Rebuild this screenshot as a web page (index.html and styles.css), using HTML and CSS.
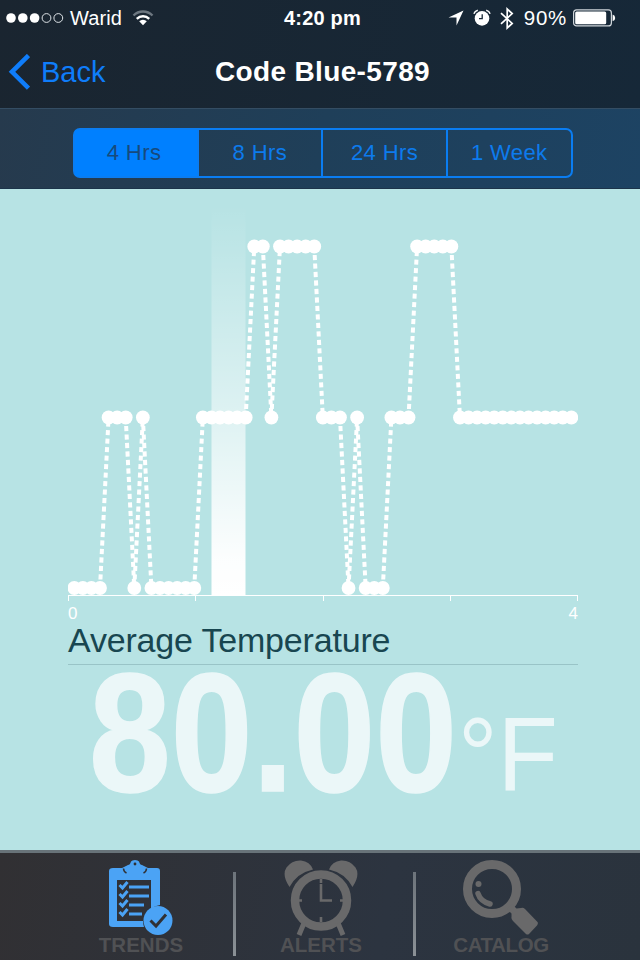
FILE: index.html
```html
<!DOCTYPE html>
<html lang="en">
<head>
    <meta charset="UTF-8">
    <meta name="viewport" content="width=device-width, initial-scale=1.0">
    <title>Code Blue-5789</title>
    <link rel="stylesheet" href="styles.css">
</head>
<body>
    <div class="app">
        <header class="header">
            <div class="status">
                <div class="status-left">
                    <svg class="signal" width="58" height="12" viewBox="0 0 58 12">
                        <g fill="#fff">
                            <circle cx="5" cy="6" r="4.8"/>
                            <circle cx="16.8" cy="6" r="4.8"/>
                            <circle cx="28.6" cy="6" r="4.8"/>
                        </g>
                        <g fill="none" stroke="#dfe4e8">
                            <circle cx="40.5" cy="6" r="4.4"/>
                            <circle cx="52.3" cy="6" r="4.4"/>
                        </g>
                    </svg>
                    <span class="carrier">Warid</span>
                    <svg width="22" height="16" viewBox="0 0 22 16" fill="none" stroke-width="2.4">
                        <path d="M1.5 5.5A13.4 13.4 0 0 1 20.5 5.5" stroke="#6d7780"/>
                        <path d="M4.8 8.8A8.8 8.8 0 0 1 17.2 8.8" stroke="#fff"/>
                        <path d="M7.2 11.3A5.4 5.4 0 0 1 14.8 11.3L11 15.3Z" fill="#fff"/>
                    </svg>
                </div>
                <span class="time">4:20 pm</span>
                <div class="status-right">
                    <svg width="16" height="16" viewBox="0 0 16 16"><path d="M15.5 .5L8.5 15.5V7.5H.5Z" fill="#fff"/></svg>
                    <svg class="clock" width="18" height="18" viewBox="0 0 18 18">
                        <circle cx="9" cy="9.4" r="7.3" fill="#fff"/>
                        <path d="M9.2 5.2V9.700H6" fill="none" stroke="#162635" stroke-width="1.3"/>
                        <path d="M.9 4.8Q1.8 2 4.8 1.2M17.1 4.8Q16.2 2 13.2 1.2" fill="none" stroke="#fff" stroke-width="1.5"/>
                    </svg>
                    <svg class="bluetooth" width="14" height="23" viewBox="0 0 14 23"><path d="M1 6.2L12.2 16.4L7.2 21V2L12.2 6.6L1 16.8" fill="none" stroke="#fff" stroke-width="1.7"/></svg>
                    <span class="percent">90%</span>
                    <svg class="battery" width="43" height="18" viewBox="0 0 43 18">
                        <rect x=".6" y=".9" width="37.8" height="16" rx="3" fill="none" stroke="#cfd5da" stroke-width="1.2"/>
                        <rect x="2.2" y="2.5" width="31" height="12.8" rx="1.5" fill="#fff"/>
                        <path d="M39.6 5.6Q42.2 6.2 42.2 8.9T39.6 12.2Z" fill="#fff"/>
                    </svg>
                </div>
            </div>
            <div class="nav">
                <a class="back">
                    <svg width="23" height="36" viewBox="0 0 23 36"><path d="M21.500 1.5L5 17.8L21.500 34.2" fill="none" stroke="#0f7dfa" stroke-width="4.6"/></svg>
                    <span>Back</span>
                </a>
                <h1 class="title">Code Blue-5789</h1>
            </div>
        </header>

        <div class="range">
            <ul class="segments">
                <li class="active">4 Hrs</li>
                <li>8 Hrs</li>
                <li>24 Hrs</li>
                <li>1 Week</li>
            </ul>
        </div>

        <main class="content">
            <svg class="chart" width="510" height="407" viewBox="68 189 510 407">
                <defs>
                    <linearGradient id="band" x1="0" y1="0" x2="0" y2="1">
                        <stop offset="0" stop-color="#fff" stop-opacity="0"/>
                        <stop offset=".5" stop-color="#fff" stop-opacity=".5"/>
                        <stop offset=".9" stop-color="#fff" stop-opacity=".95"/>
                        <stop offset="1" stop-color="#fff"/>
                    </linearGradient>
                </defs>
                <rect x="211.5" y="205" width="34" height="391" fill="url(#band)"/>
                <g id="lines" stroke="#fff" stroke-width="4" stroke-dasharray="5.1 3.4"></g>
                <g id="dots" fill="#fff"></g>
            </svg>
            <div class="ticks"><i></i><i></i><i></i><i></i></div>
            <div class="axis-labels"><span>0</span><span>4</span></div>
            <h2 class="caption">Average Temperature</h2>
            <svg class="reading" width="510" height="150" viewBox="68 665 510 150" fill="#ebf7f8">
                <text class="value" x="89" y="790.5" textLength="368" lengthAdjust="spacingAndGlyphs">80.00</text>
                <text class="unit" x="458" y="790.5" textLength="100" lengthAdjust="spacingAndGlyphs">°F</text>
            </svg>
        </main>

        <nav class="tabs">
            <a class="tab">
                <svg width="64" height="76" viewBox="0 0 64 76">
                    <path fill="#4ba3f5" fill-rule="evenodd" d="M4 8H13L19 5Q21 5 22 1.5Q23 0 26 0T30 1.5Q31 5 33 5L39 8H48Q51 8 51 11V45Q45 46 42 49V20H8V61H34Q34 64 35 67H4Q0 67 0 64V11Q0 8 4 8Z"/>
                    <path d="M14.5 8.500Q14.5 11.500 17.500 13M37.500 8.500Q37.500 11.500 34.500 13" fill="none" stroke="#303135" stroke-width="1.5"/>
                    <circle cx="26" cy="4" r="1.4" fill="#303135"/>
                    <g fill="none" stroke="#4ba3f5" stroke-width="3">
                        <path d="M20 27H40M20 36H40M20 45H35M20 54H33"/>
                        <path d="M10.500 25L13.500 28L18.500 22M10.500 34L13.500 37L18.500 31M10.500 43L13.500 46L18.500 40M10.500 52L13.500 55L18.500 49"/>
                    </g>
                    <circle cx="49" cy="60.500" r="14.500" fill="#4ba3f5"/>
                    <path d="M41.500 60.500L47 66L57 54.500" fill="none" stroke="#303135" stroke-width="3"/>
                </svg>
                <span>TRENDS</span>
            </a>
            <a class="tab">
                <svg width="76" height="76" viewBox="0 0 76 76">
                    <g fill="#69696a">
                        <path d="M6.500 27Q-1.500 15 3.500 7.500Q9 0 18 .5Q27 1.500 30 9.500Q14 13 6.500 27Z"/>
                        <path d="M69.500 27Q77.500 15 72.500 7.500Q67 0 58 .5Q49 1.500 46 9.500Q62 13 69.500 27Z"/>
                    </g>
                    <circle cx="38" cy="40.500" r="26" fill="none" stroke="#69696a" stroke-width="8.500"/>
                    <path d="M21 63L16 75M55 63L60 75" stroke="#69696a" stroke-width="5"/>
                    <path d="M38 24V40.500H49" fill="none" stroke="#69696a" stroke-width="2.600"/>
                    <path d="M38 19V23M38 57V62M16 40.500H19M57 40.500H60" stroke="#69696a" stroke-width="2.600"/>
                </svg>
                <span>ALERTS</span>
            </a>
            <a class="tab catalog">
                <svg width="76" height="76" viewBox="0 0 76 76">
                    <circle cx="29" cy="29" r="24.500" fill="none" stroke="#69696a" stroke-width="9"/>
                    <circle cx="15.500" cy="24" r="3" fill="#69696a"/>
                    <path d="M15 33.500Q17.500 41.500 27 44" fill="none" stroke="#69696a" stroke-width="5.500" stroke-linecap="round"/>
                    <path d="M44 49L49 44L53.500 48.500L58 48Q60 47 62 49L74.500 62Q75.500 63.500 74 65.500L66 74Q64.500 75 63 74L50 61Q48 59 48.500 57V53.500Z" fill="#69696a"/>
                </svg>
                <span>CATALOG</span>
            </a>
        </nav>
    </div>
    <script src="chart.js"></script>
</body>
</html>
```
FILE: styles.css
```css
* {box-sizing: border-box;}
body,h1,h2,ul,li {margin: 0; padding: 0;}
body {
    font: 20px/1 "Liberation Sans", Arial, sans-serif;
    background: #b7e3e4;
}
svg {display: block; flex: none;}
.app {
    display: flex;
    flex-direction: column;
    width: 640px;
    height: 960px;
    overflow: hidden;
}

/* header */
.header {
    height: 109px;
    color: #fff;
    background: linear-gradient(100deg, #1a2530, #162838);
    border-bottom: 1px solid #344d63;
}
.status {
    display: grid;
    grid-template-columns: 278px auto 1fr;
    align-items: center;
    height: 36px;
    padding: 0 26px 0 6px;
}
.status-left, .status-right {display: flex; align-items: center;}
.status-right {justify-content: flex-end;}
.carrier {margin: 0 10px 0 6px; letter-spacing: .1px;}
.time {font-weight: bold; letter-spacing: .2px;}
.clock {margin-left: 9px;}
.bluetooth {margin-left: 9px;}
.percent {margin-left: 10px; font-size: 20.5px; letter-spacing: .7px;}
.battery {margin-left: 6px; margin-right: -2px;}
.nav {
    display: grid;
    grid-template-columns: 200px 1fr 200px;
    align-items: center;
    height: 72px;
    padding-left: 7px;
}
.back {
    display: flex;
    align-items: center;
    gap: 11px;
    color: #0f7dfa;
    font-size: 29px;
}
.title {
    margin-left: -2px;
    font-size: 28px;
    text-align: center;
    white-space: nowrap;
    letter-spacing: .35px;
}

/* time range */
.range {
    display: flex;
    justify-content: center;
    height: 80px;
    padding: 19px 0 0 5px;
    background: linear-gradient(100deg, #263a4d, #1f3f59 50%, #1d4363);
    border-bottom: 1px solid #1c344a;
}
.segments {
    display: flex;
    width: 500px;
    height: 50px;
    border: 2px solid #0a7df2;
    border-radius: 7px;
    list-style: none;
}
.segments li {
    flex: 1;
    line-height: 46px;
    text-align: center;
    font-size: 22px;
    letter-spacing: .4px;
    color: #0d7bed;
}
.segments li + li {border-left: 2px solid #0a7df2;}
.segments .active {
    flex: 0 0 122px;
    padding-right: 3px;
    background: #0080ff;
    color: #174a7c;
}

/* chart */
.content {
    flex: none;
    height: 661px;
    padding: 0 62px 0 68px;
    background: #b7e3e4;
}
.ticks {
    display: flex;
    height: 6px;
    margin-top: -1px;
    border-top: 1px solid #fff;
    border-right: 1px solid #fff;
}
.ticks i {flex: 1; border-left: 1px solid #fff;}
.axis-labels {
    display: flex;
    justify-content: space-between;
    height: 20px;
    padding-top: 4px;
    font-size: 17px;
    color: #fff;
}
.caption {
    height: 44px;
    border-bottom: 1px solid #99c4c7;
    font-size: 34px;
    font-weight: normal;
    line-height: 38px;
    letter-spacing: -.18px;
    color: #184650;
}
.reading {overflow: visible;}
.value {
    font-size: 168px;
    font-weight: bold;
    stroke: #ebf7f8;
    stroke-width: 1.5px;
}
.unit {font-size: 105px;}

/* tabs */
.tabs {
    display: flex;
    height: 110px;
    padding: 0 49px 0 51px;
    border-top: 3px solid #687379;
    background: linear-gradient(100deg, #313033, #2c3440 60%, #2a333d);
}
.tab {
    display: flex;
    flex-direction: column;
    align-items: center;
    width: 180px;
    padding-top: 7px;
    color: #505154;
    font-weight: bold;
    font-size: 20.5px;
}
.tab span {margin-top: -1px;}
.tab + .tab {
    background: linear-gradient(#6d747b, #8b9196) 2px 19px / 3px 84px no-repeat;
}
.catalog span {letter-spacing: -.4px;}
```
FILE: chart.js
```js
// one letter per reading: l = low, m = middle, h = high
var readings = "llllmmmlmllllllmmmmmmhhmhhhhhmmmlmlllmmmhhhhhmmmmmmmmmmmmmm";
var levels = {l: 588, m: 417.5, h: 246.5};
var lines = document.getElementById("lines");
var dots = document.getElementById("dots");
var ns = "http://www.w3.org/2000/svg";

function add(parent, name, attrs) {
    var el = document.createElementNS(ns, name);
    for (var key in attrs) {
        el.setAttribute(key, attrs[key]);
    }
    parent.appendChild(el);
}

for (var i = 0; i < readings.length; i++) {
    var x = 74.3 + i * 8.57;
    var y = levels[readings[i]];
    add(dots, "circle", {cx: x, cy: y, r: 6.9});
    if (i > 0) {
        add(lines, "line", {x1: x - 8.57, y1: levels[readings[i - 1]], x2: x, y2: y});
    }
}
```
